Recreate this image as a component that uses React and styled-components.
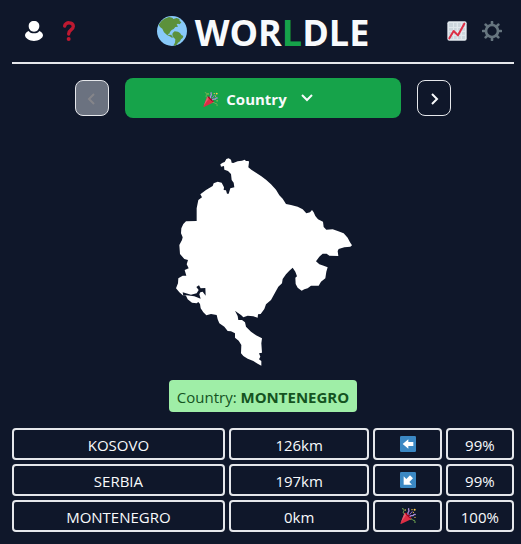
import React from "react";
import styled, { createGlobalStyle } from "styled-components";

const GlobalStyle = createGlobalStyle`
  * { box-sizing: border-box; }
  body {
    margin: 0;
    background: #0f172a;
    color: #f8fafc;
    font-family: "Open Sans", "Noto Sans", sans-serif;
    font-size: 15px;
    line-height: 24px;
  }
`;

const Page = styled.div`
  min-height: 100vh;
  padding: 0 7px 12px 12px;
  background: #0f172a;
`;

const Header = styled.header`
  display: flex;
  align-items: center;
  justify-content: space-between;
  height: 64px;
  border-bottom: 2px solid #e5e7eb;
`;

const HeaderGroup = styled.div`
  display: flex;
  align-items: center;
  gap: 15px;
  padding: 0 12px;
`;

const IconButton = styled.button`
  display: flex;
  align-items: center;
  justify-content: center;
  width: 20px;
  height: 20px;
  padding: 0;
  border: 0;
  background: none;
  cursor: pointer;
`;

const Title = styled.h1`
  display: flex;
  align-items: center;
  gap: 8px;
  margin: 0;
  font-size: 36px;
  line-height: 40px;
  font-weight: 700;
`;

const TitleText = styled.span`
  padding-top: 4px;
`;

const Accent = styled.span`
  color: #16a34a;
`;

const RoundNav = styled.nav`
  display: flex;
  align-items: center;
  gap: 16px;
  width: 75%;
  margin: 14px auto 0;
`;

const StepButton = styled.button`
  display: flex;
  align-items: center;
  justify-content: center;
  width: 34px;
  height: 36px;
  padding: 2px 0 0;
  border: 1px solid #e5e7eb;
  border-radius: 8px;
  background: #0f172a;
  color: #f8fafc;
  cursor: pointer;
  &:disabled {
    background: #6b7280;
    color: #85858a;
    cursor: default;
  }
`;

const RoundButton = styled.button`
  display: flex;
  flex: 1;
  align-items: center;
  justify-content: center;
  gap: 8px;
  height: 40px;
  padding: 2px 8px 0 0;
  border: 0;
  border-radius: 8px;
  background: #16a34a;
  color: #f8fafc;
  font: inherit;
  font-weight: 700;
  cursor: pointer;
`;

const RoundName = styled.span`
  margin-right: 4px;
`;

const MapArea = styled.main`
  display: flex;
  flex-direction: column;
  align-items: center;
  gap: 10px;
  padding-top: 32px;
`;

const Answer = styled.p`
  margin: 0;
  padding: 5px 8px 3px;
  border-radius: 4px;
  background: #9feea7;
  color: #14531f;
`;

const Guesses = styled.table`
  display: block;
  margin-top: 16px;
`;

const GuessList = styled.tbody`
  display: grid;
  gap: 4px;
`;

const GuessRow = styled.tr`
  display: grid;
  grid-template-columns: repeat(7, minmax(0, 1fr));
  gap: 4px;
`;

const Cell = styled.td`
  display: flex;
  align-items: center;
  justify-content: center;
  grid-column: span ${(p) => p.$span || 1};
  height: 32px;
  padding: ${(p) => (p.$icon ? "0" : "2px 0 0")};
  border: 2px solid #e5e7eb;
  border-radius: 4px;
`;

const Person = () => (
  <svg width="18" height="20" viewBox="0 0 54 60" fill="#fff" aria-hidden="true">
    <path d="M27 0c10 0 16 6 16 15s-6 17-16 17-16-8-16-17S17 0 27 0z" />
    <path d="M11 30c4 6 10 7 16 7s12-1 16-7c6 2 11 8 11 13 0 9-14 17-27 17S0 52 0 43c0-5 5-11 11-13z" />
  </svg>
);

const Question = () => (
  <svg width="12" height="20" viewBox="0 0 36 60" aria-hidden="true">
    <path d="M5 15C6 2 31 2 31 16c0 11-14 9-14 23" fill="none" stroke="#be1931" strokeWidth="10" strokeLinecap="round" />
    <circle cx="17" cy="54" r="6" fill="#be1931" />
  </svg>
);

const Globe = () => (
  <svg width="30" height="30" viewBox="0 0 90 90" aria-hidden="true">
    <circle cx="45" cy="45" r="45" fill="#88c9f9" />
    <path fill="#5c913b" d="M13 16L22 8l14-5 10 2 3 4 10-3 8 3 1 6 5 4-5 6-5-2-4 2 4 7-8 1-5 6-6 3-5 6-2 5-5 1 3 3 8-1 2 5 5 2-5 2-7-4-8-4-9-8-5-11-7-5-4-7z" />
    <path fill="#5c913b" d="M47 51l6-5 10 1 6 4 4 6 6 3-2 6-5 4-3 6-6 4-4 6-6 3-3-2 4-7 1-10-6-6-3-7z" />
  </svg>
);

const Chart = () => (
  <svg width="20" height="20" viewBox="0 0 60 60" aria-hidden="true">
    <rect x="1" y="1" width="58" height="58" rx="6" fill="#e1e8ed" />
    <path d="M6 6h12v12H6zM21 6h8v12h-8zM33 6h8v12h-8zM45 6h9v12h-9zM6 21h12v8H6zM21 21h8v8h-8zM33 21h8v8h-8zM45 21h9v8h-9zM6 33h12v8H6zM21 33h8v8h-8zM33 33h8v8h-8zM45 33h9v8h-9zM6 45h12v9H6zM21 45h8v9h-8zM33 45h8v9h-8zM45 45h9v9h-9z" fill="#ccd6dd" />
    <path d="M7 52l13-22 13 13L52 8" fill="none" stroke="#dd2e44" strokeWidth="6" strokeLinecap="round" strokeLinejoin="round" />
  </svg>
);

const Gear = () => (
  <svg width="20" height="20" viewBox="0 0 60 60" fill="none" stroke="#66757f" aria-hidden="true">
    <circle cx="30" cy="30" r="18" strokeWidth="8" />
    <path d="M30 3v8M30 49v8M3 30h8M49 30h8M11 11l6 6M43 43l6 6M49 11l-6 6M17 43l-6 6" strokeWidth="8" strokeLinecap="round" />
  </svg>
);

const Popper = ({ size }) => (
  <svg width={size} height={size} viewBox="0 0 48 48" fill="none" aria-hidden="true">
    <path d="M1 47L14 14c7 1 19 12 21 19L3 48z" fill="#dd2e44" />
    <path d="M2 44L14 14l4 8z" fill="#ea596e" />
    <ellipse cx="25" cy="23" rx="3" ry="12" transform="rotate(-45 25 23)" fill="#a0041e" />
    <path d="M6 2c6 0 8 4 5 8s0 6 3 9" stroke="#77b255" strokeWidth="3" />
    <path d="M27 1c-4 4 2 6-1 10s-4 4-1 9" stroke="#aa8dd8" strokeWidth="4" />
    <path d="M29 26c5-6 9-1 11-4s4-4 7-2" stroke="#aa8dd8" strokeWidth="4" />
    <path d="M31 34c7-3 6 4 10 3s4 3 4 8" stroke="#77b255" strokeWidth="3" />
    <path d="M29 20l8-10" stroke="#9266cc" strokeWidth="3" />
    <g fill="#ffcc4d">
      <circle cx="36" cy="5" r="2" />
      <circle cx="44" cy="5" r="3" />
      <circle cx="40" cy="13" r="2" />
      <circle cx="45" cy="28" r="2" />
      <circle cx="16" cy="6" r="2" />
    </g>
  </svg>
);

const Chevron = ({ d, label }) => (
  <svg width="16" height="16" viewBox="0 0 16 16" fill="none" stroke="currentColor" strokeWidth="2" role="img" aria-label={label}>
    <path d={d} />
  </svg>
);

const Arrow = ({ diagonal }) => (
  <svg width="16" height="16" viewBox="0 0 48 48" role="img" aria-label={diagonal ? "south-west" : "west"}>
    <rect width="48" height="48" rx="4" fill="#3b88c3" />
    {diagonal ? (
      <path d="M11 13v25h25l-8-8 11-11-9-9-11 11z" fill="#fff" />
    ) : (
      <path d="M8 24L25 10v8h15v12H25v8z" fill="#fff" />
    )}
  </svg>
);

const CountryShape = () => (
  <svg width="195" height="220" viewBox="0 0 585 660" role="img" aria-label="Country outline">
    <path
      fill="#fff"
      d="M163 43L170 38 176 36 181 27 188 25 195 29 197 38 202 39 215 34 228 32 236 29 240 33 248 33 249 37 247 52 256 59 270 68 285 78 300 89 315 103 330 119 340 136 350 146 360 162 375 165 395 170 410 178 421 190 432 187 438 180 443 187 448 198 456 208 471 215 473 231 481 239 500 238 515 243 533 250 545 263 552 277 558 286 553 290 535 292 518 297 515 303 517 318 490 317 482 311 470 311 460 320 450 334 460 343 473 347 485 352 481 365 478 385 465 395 458 407 435 407 425 415 415 418 407 422 395 413 389 402 388 383 393 379 388 365 380 353 370 362 360 373 350 387 348 400 337 410 327 428 315 450 300 463 295 477 284 492 276 493 275 503 262 499 245 497 232 502 225 495 215 488 207 482 215 498 217 510 228 510 237 517 240 530 255 545 270 556 288 565 286 580 288 608 279 610 283 620 279 628 286 633 286 647 275 641 262 633 245 626 232 618 225 610 226 585 218 572 207 563 207 550 195 544 185 543 175 530 160 520 155 508 152 495 135 492 121 496 112 487 104 475 102 462 97 456 92 460 78 458 65 448 60 437 52 437 40 427 30 415 36 400 37 385 50 377 61 377 56 360 68 355 62 343 66 330 55 327 42 312 40 285 48 270 50 262 45 250 46 235 52 222 60 214 92 213 92 175 97 150 108 142 103 133 120 120 140 108 143 100 155 95 167 98 174 112 173 120 180 121 183 131 188 131 193 115 205 112 203 98 197 90 195 72 186 63 175 59 174 48 165 50Z"
    />
    <path fill="#0f172a" d="M50 427L75 434 92 430 98 420 91 411 99 406 104 415 118 414 119 437 110 425 103 427 100 433 104 446 85 439 62 436 52 438Z" />
  </svg>
);

const guesses = [
  { name: "KOSOVO", distance: "126km", icon: <Arrow />, percent: "99%" },
  { name: "SERBIA", distance: "197km", icon: <Arrow diagonal />, percent: "99%" },
  { name: "MONTENEGRO", distance: "0km", icon: <Popper size={16} />, percent: "100%" },
];

export default function App() {
  return (
    <Page>
      <GlobalStyle />
      <Header>
        <HeaderGroup>
          <IconButton aria-label="Profile"><Person /></IconButton>
          <IconButton aria-label="How to play"><Question /></IconButton>
        </HeaderGroup>
        <Title>
          <Globe />
          <TitleText>WOR<Accent>L</Accent>DLE</TitleText>
        </Title>
        <HeaderGroup>
          <IconButton aria-label="Statistics"><Chart /></IconButton>
          <IconButton aria-label="Settings"><Gear /></IconButton>
        </HeaderGroup>
      </Header>
      <RoundNav>
        <StepButton disabled><Chevron d="M10 3L5 8l5 5" label="Previous round" /></StepButton>
        <RoundButton>
          <Popper size={15} />
          <RoundName>Country</RoundName>
          <Chevron d="M3 4l5 5 5-5" label="Open rounds" />
        </RoundButton>
        <StepButton><Chevron d="M6 3l5 5-5 5" label="Next round" /></StepButton>
      </RoundNav>
      <MapArea>
        <CountryShape />
        <Answer>Country: <strong>MONTENEGRO</strong></Answer>
      </MapArea>
      <Guesses>
        <GuessList>
          {guesses.map((g) => (
            <GuessRow key={g.name}>
              <Cell $span={3}>{g.name}</Cell>
              <Cell $span={2}>{g.distance}</Cell>
              <Cell $icon>{g.icon}</Cell>
              <Cell>{g.percent}</Cell>
            </GuessRow>
          ))}
        </GuessList>
      </Guesses>
    </Page>
  );
}
